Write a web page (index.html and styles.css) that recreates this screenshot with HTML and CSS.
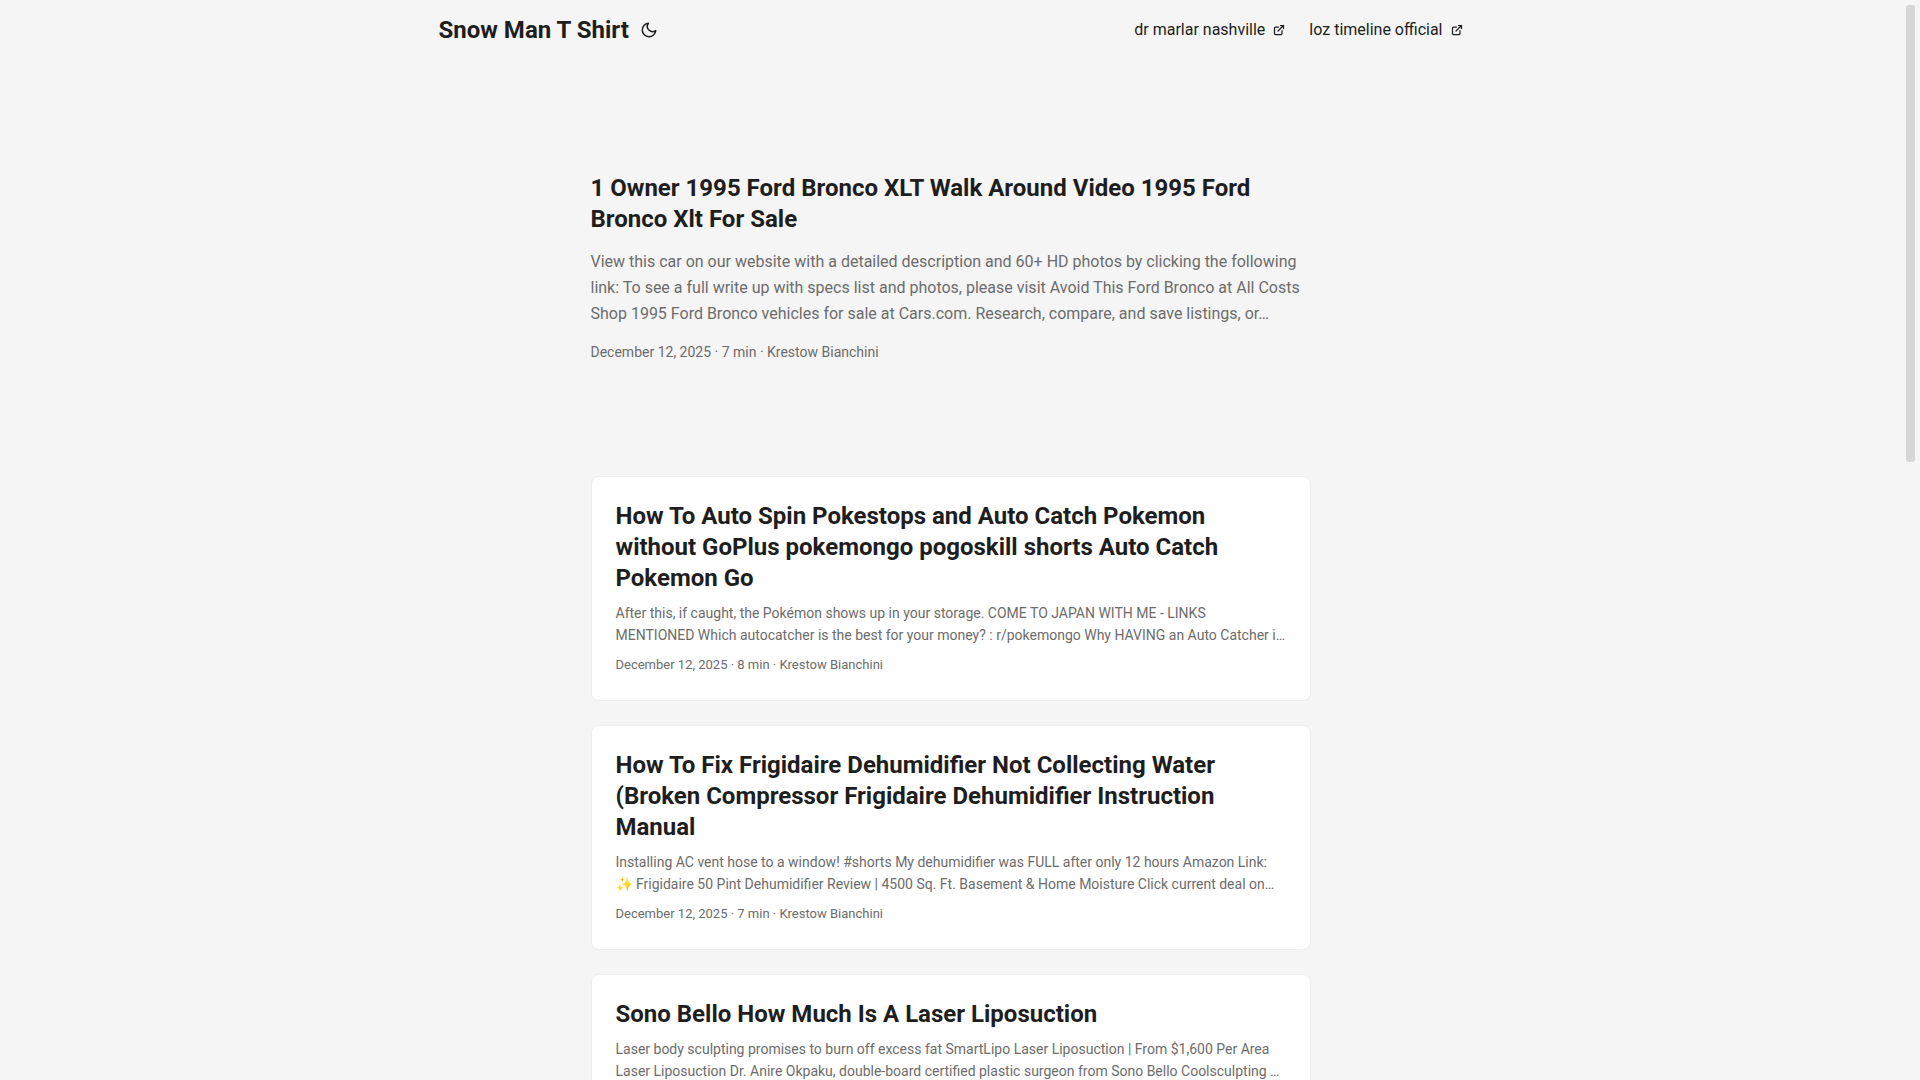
FILE: index.html
```html
<!DOCTYPE html>
<html lang="en">
<head>
  <meta charset="UTF-8" />
  <meta name="viewport" content="width=device-width, initial-scale=1.0" />
  <title>Snow Man T Shirt</title>
  <link rel="stylesheet" href="styles.css">
</head>
<body>
  <div class="page">
    <header class="header">
      <nav class="nav">
        <div class="logo">
          <a href="#">Snow Man T Shirt</a>
          <button class="theme-toggle" type="button" aria-label="Toggle theme">
            <svg width="18" height="18" viewBox="0 0 24 24" fill="none" stroke="currentColor" stroke-width="2" stroke-linecap="round" stroke-linejoin="round">
              <path d="M21 12.79A9 9 0 1 1 11.21 3 7 7 0 0 0 21 12.79z"></path>
            </svg>
          </button>
        </div>
        <ul class="menu">
          <li>
            <a href="#">
              <span>dr marlar nashville</span>
              <svg width="12" height="12" viewBox="0 0 24 24" fill="none" stroke="currentColor" stroke-width="2.5" stroke-linecap="round" stroke-linejoin="round">
                <path d="M18 13v6a2 2 0 01-2 2H5a2 2 0 01-2-2V8a2 2 0 012-2h6"></path>
                <path d="M15 3h6v6"></path>
                <path d="M10 14L21 3"></path>
              </svg>
            </a>
          </li>
          <li>
            <a href="#">
              <span>loz timeline official</span>
              <svg width="12" height="12" viewBox="0 0 24 24" fill="none" stroke="currentColor" stroke-width="2.5" stroke-linecap="round" stroke-linejoin="round">
                <path d="M18 13v6a2 2 0 01-2 2H5a2 2 0 01-2-2V8a2 2 0 012-2h6"></path>
                <path d="M15 3h6v6"></path>
                <path d="M10 14L21 3"></path>
              </svg>
            </a>
          </li>
        </ul>
      </nav>
    </header>

    <main class="main">
      <!-- Latest post -->
      <article class="first-entry">
        <h2 class="entry-title"><a href="#">1 Owner 1995 Ford Bronco XLT Walk Around Video 1995 Ford Bronco Xlt For Sale</a></h2>
        <p class="entry-content">View this car on our website with a detailed description and 60+ HD photos by clicking the following link: To see a full write up with specs list and photos, please visit Avoid This Ford Bronco at All Costs Shop 1995 Ford Bronco vehicles for sale at Cars.com. Research, compare, and save listings, or…</p>
        <footer class="entry-footer">December 12, 2025 · 7 min · Krestow Bianchini</footer>
      </article>

      <!-- Post list -->
      <article class="post-entry">
        <h2 class="entry-title"><a href="#">How To Auto Spin Pokestops and Auto Catch Pokemon without GoPlus pokemongo pogoskill shorts Auto Catch Pokemon Go</a></h2>
        <p class="entry-content">After this, if caught, the Pokémon shows up in your storage. COME TO JAPAN WITH ME - LINKS MENTIONED Which autocatcher is the best for your money? : r/pokemongo Why HAVING an Auto Catcher i…</p>
        <footer class="entry-footer">December 12, 2025 · 8 min · Krestow Bianchini</footer>
      </article>

      <article class="post-entry">
        <h2 class="entry-title"><a href="#">How To Fix Frigidaire Dehumidifier Not Collecting Water (Broken Compressor Frigidaire Dehumidifier Instruction Manual</a></h2>
        <p class="entry-content">Installing AC vent hose to a window! #shorts My dehumidifier was FULL after only 12 hours Amazon Link: ✨ Frigidaire 50 Pint Dehumidifier Review | 4500 Sq. Ft. Basement &amp; Home Moisture Click current deal on…</p>
        <footer class="entry-footer">December 12, 2025 · 7 min · Krestow Bianchini</footer>
      </article>

      <article class="post-entry">
        <h2 class="entry-title"><a href="#">Sono Bello How Much Is A Laser Liposuction</a></h2>
        <p class="entry-content">Laser body sculpting promises to burn off excess fat SmartLipo Laser Liposuction | From $1,600 Per Area Laser Liposuction Dr. Anire Okpaku, double-board certified plastic surgeon from Sono Bello Coolsculpting …</p>
        <footer class="entry-footer">December 12, 2025 · 7 min · Krestow Bianchini</footer>
      </article>
    </main>
  </div>
  <div class="scroll-thumb"></div>
</body>
</html>
```

FILE: styles.css
```css
:root {
  --gap: 24px;
  --nav-width: 1024px;
  --main-width: 720px;
  --header-height: 60px;
  --radius: 8px;
  --theme: #f5f5f5;
  --entry: #fff;
  --primary: #1e1e1e;
  --secondary: #6c6c6c;
  --tertiary: #d6d6d6;
  --border: #eee;
}

* {
  box-sizing: border-box;
  margin: 0;
  padding: 0;
}

body {
  font-family: Roboto, "Liberation Sans", sans-serif;
  font-size: 16px;
  line-height: 26px;
  color: var(--primary);
  background: var(--theme);
}

a {
  color: inherit;
  text-decoration: none;
}

/* room for the scrollbar on the right */
.page {
  height: 100vh;
  overflow: hidden;
  padding-right: 19px;
}

/* Header */
.nav {
  display: flex;
  justify-content: space-between;
  max-width: calc(var(--nav-width) + var(--gap) * 2);
  margin: 0 auto;
  padding: 0 var(--gap);
  line-height: var(--header-height);
}

.logo {
  display: flex;
  align-items: center;
  gap: 11px;
  font-size: 24px;
  font-weight: 700;
}

.theme-toggle {
  display: flex;
  border: none;
  background: none;
  color: inherit;
  cursor: pointer;
}

.menu {
  display: flex;
  gap: var(--gap);
  list-style: none;
}

.menu a {
  display: flex;
  align-items: center;
  gap: 8px;
}

/* Entries */
.main {
  max-width: calc(var(--main-width) + var(--gap) * 2);
  margin: 0 auto;
  padding: var(--gap);
}

.entry-title {
  font-size: 24px;
  line-height: 31px;
}

.entry-content {
  color: var(--secondary);
}

.entry-footer {
  color: var(--secondary);
  line-height: 22px;
}

.first-entry {
  display: flex;
  flex-direction: column;
  justify-content: center;
  min-height: 320px;
  margin: var(--gap) 0 calc(var(--gap) * 2);
}

.first-entry .entry-content {
  margin: 14px 0;
}

.first-entry .entry-footer {
  font-size: 14px;
}

.post-entry {
  margin-bottom: var(--gap);
  padding: var(--gap);
  background: var(--entry);
  border: 1px solid var(--border);
  border-radius: var(--radius);
}

.post-entry .entry-content {
  margin: 8px 0;
  font-size: 14px;
  line-height: 22px;
}

.post-entry .entry-footer {
  font-size: 13px;
}

/* Scrollbar thumb */
.scroll-thumb {
  position: fixed;
  top: 5px;
  right: 5px;
  width: 9px;
  height: 457px;
  border-radius: 3px;
  background: var(--tertiary);
}
```
